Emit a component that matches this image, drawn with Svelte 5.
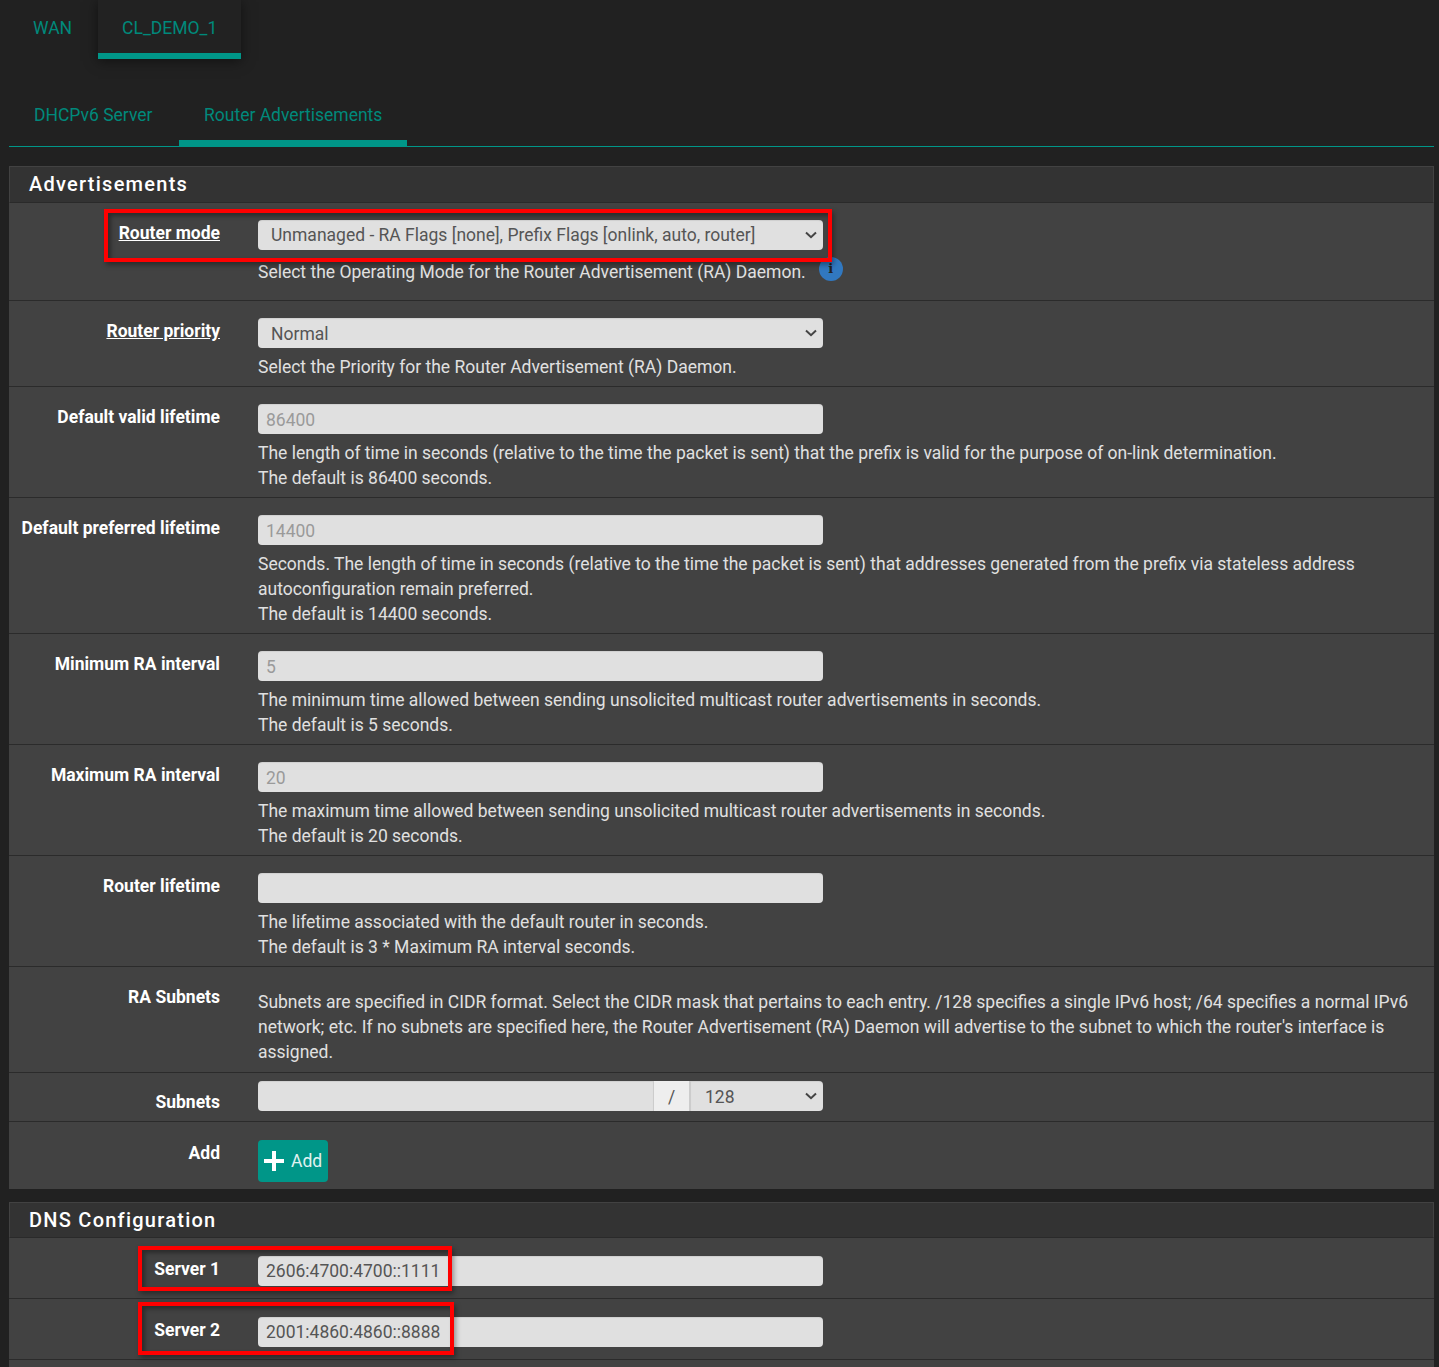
<script>
  const sections = [
    {
      title: 'Advertisements',
      rows: [
        { label: 'Router mode', link: true, h: 98, select: 'Unmanaged - RA Flags [none], Prefix Flags [onlink, auto, router]', help: ['Select the Operating Mode for the Router Advertisement (RA) Daemon.'], info: true, boxed: 'mode' },
        { label: 'Router priority', link: true, h: 86, select: 'Normal', help: ['Select the Priority for the Router Advertisement (RA) Daemon.'] },
        { label: 'Default valid lifetime', h: 111, placeholder: '86400', help: ['The length of time in seconds (relative to the time the packet is sent) that the prefix is valid for the purpose of on-link determination.', 'The default is 86400 seconds.'] },
        { label: 'Default preferred lifetime', h: 136, placeholder: '14400', help: ['Seconds. The length of time in seconds (relative to the time the packet is sent) that addresses generated from the prefix via stateless address autoconfiguration remain preferred.', 'The default is 14400 seconds.'] },
        { label: 'Minimum RA interval', h: 111, placeholder: '5', help: ['The minimum time allowed between sending unsolicited multicast router advertisements in seconds.', 'The default is 5 seconds.'] },
        { label: 'Maximum RA interval', h: 111, placeholder: '20', help: ['The maximum time allowed between sending unsolicited multicast router advertisements in seconds.', 'The default is 20 seconds.'] },
        { label: 'Router lifetime', h: 111, placeholder: '', help: ['The lifetime associated with the default router in seconds.', 'The default is 3 * Maximum RA interval seconds.'] },
        { label: 'RA Subnets', h: 106, textOnly: true, help: ["Subnets are specified in CIDR format. Select the CIDR mask that pertains to each entry. /128 specifies a single IPv6 host; /64 specifies a normal IPv6 network; etc. If no subnets are specified here, the Router Advertisement (RA) Daemon will advertise to the subnet to which the router's interface is assigned."] },
        { label: 'Subnets', h: 49, subnet: true, help: [] },
        { label: 'Add', h: 67, add: true, help: [] }
      ]
    },
    {
      title: 'DNS Configuration',
      rows: [
        { label: 'Server 1', h: 61, value: '2606:4700:4700::1111', help: [], boxed: 'server1' },
        { label: 'Server 2', h: 61, value: '2001:4860:4860::8888', help: [], boxed: 'server2' },
        { label: '', h: 8, spacer: true, help: [] }
      ]
    }
  ];
</script>

<div class="page">
  <div class="tabs top">
    <span class="tab">WAN</span>
    <span class="tab active">CL_DEMO_1</span>
  </div>
  <div class="tabs sub">
    <span class="subtab">DHCPv6 Server</span>
    <span class="subtab active">Router Advertisements</span>
  </div>

  {#each sections as section}
    <section class="panel">
      <h2>{section.title}</h2>
      {#each section.rows as row}
        <div class="row" class:spacer={row.spacer} class:last={row.add} style="height: {row.h}px">
          {#if !row.spacer}
            <div class="label" class:low={row.add || row.value} class:high={row.subnet}>
              {#if row.link}<u>{row.label}</u>{:else}{row.label}{/if}
            </div>
            <div class="field" class:textonly={row.textOnly} class:tight={row.subnet} class:dns={row.value} class:addrow={row.add}>
              {#if row.select}
                <div class="control select" class:raised={row.info}><span>{row.select}</span><svg viewBox="0 0 12 8" width="12" height="8"><path d="M1 1.5 6 6.2 11 1.5" /></svg></div>
              {:else if row.subnet}
                <div class="group">
                  <div class="control grow"></div>
                  <div class="slash">/</div>
                  <div class="control select mask"><span>128</span><svg viewBox="0 0 12 8" width="12" height="8"><path d="M1 1.5 6 6.2 11 1.5" /></svg></div>
                </div>
              {:else if row.add}
                <div class="add">
                  <svg viewBox="0 0 22 22" width="22" height="22"><path d="M9 1h4v8h8v4h-8v8H9v-8H1V9h8z" /></svg>
                  <span>Add</span>
                </div>
              {:else if row.placeholder !== undefined}
                <div class="control input ph">{row.placeholder}</div>
              {:else if row.value}
                <div class="control input val">{row.value}</div>
              {/if}
              {#each row.help as line}
                <p class="help" class:withinfo={row.info}>{line}{#if row.info}<span class="info">i</span>{/if}</p>
              {/each}
            </div>
            {#if row.boxed}<div class="redbox {row.boxed}"></div>{/if}
          {/if}
        </div>
      {/each}
    </section>
  {/each}
</div>

<style>
  :global(body) {
    background: #212121;
    overflow: hidden;
  }
  .page {
    height: 1367px;
    padding: 0 5px 0 9px;
    box-sizing: border-box;
    overflow: hidden;
    font-family: Roboto, "Liberation Sans", sans-serif;
    font-size: 17.5px;
    color: #e0e0e0;
  }
  .tabs {
    display: flex;
    white-space: nowrap;
  }
  .top {
    height: 59px;
  }
  .tab {
    height: 54px;
    padding: 18px 24px 0;
    box-sizing: border-box;
    color: #00897b;
    line-height: 20px;
  }
  .tab.active {
    height: 59px;
    width: 143px;
    margin-left: 2px;
    border-bottom: 6px solid #009688;
    background: #222;
    box-shadow: 0 2px 12px rgba(0, 0, 0, 0.5);
  }
  .sub {
    margin-top: 27px;
    height: 60px;
    border-bottom: 1px solid #009688;
  }
  .subtab {
    height: 60px;
    padding: 19px 25px 0;
    box-sizing: border-box;
    color: #00897b;
    line-height: 20px;
  }
  .subtab.active {
    margin-left: 1px;
    padding-left: 25.5px;
    width: 228px;
    border-bottom: 7px solid #009688;
    height: 61px;
  }
  .panel {
    margin-top: 19px;
    background: #424242;
  }
  .panel + .panel {
    margin-top: 13px;
  }
  h2 {
    margin: 0;
    height: 37px;
    padding: 0 0 0 19px;
    box-sizing: border-box;
    background: #333;
    border: 1px solid #424242;
    border-bottom: 1px solid #2a2a2a;
    font-size: 20px;
    font-weight: 500;
    line-height: 34px;
    letter-spacing: 1.25px;
    color: #fff;
  }
  .panel + .panel h2 {
    height: 36px;
  }
  .row {
    position: relative;
    display: flex;
    box-sizing: border-box;
    border-bottom: 1px solid #2b2b2b;
  }
  .row.spacer,
  .row.last {
    border-bottom: 0;
  }
  .label {
    width: 211px;
    flex: none;
    padding-top: 18px;
    text-align: right;
    font-weight: 700;
    line-height: 25px;
    color: #fff;
  }
  .label.high {
    padding-top: 17px;
  }
  .label.low {
    padding-top: 19px;
  }
  .field {
    margin-left: 38px;
    flex: 1;
    min-width: 0;
    padding-top: 17px;
    padding-right: 24px;
  }
  .field.textonly {
    padding-top: 23px;
  }
  .field.tight {
    padding-top: 8px;
  }
  .field.dns,
  .field.addrow {
    padding-top: 18px;
  }
  .control {
    width: 565px;
    height: 30px;
    box-sizing: border-box;
    border-radius: 4px;
    background: #e0e0e0;
    box-shadow: inset 0 1px 1px rgba(0, 0, 0, 0.075);
    line-height: 30px;
    color: #555;
  }
  .select {
    display: flex;
    align-items: center;
    justify-content: space-between;
    padding: 0 6px 0 13px;
  }
  .select span {
    position: relative;
    top: 1px;
  }
  .select.raised span {
    top: 0;
  }
  .select svg {
    fill: none;
    stroke: #444;
    stroke-width: 2;
  }
  .input {
    padding-left: 8px;
  }
  .ph {
    color: #9a9a9a;
    line-height: 32px;
  }
  .group {
    display: flex;
    width: 565px;
  }
  .grow {
    flex: 1;
    width: auto;
    border-radius: 4px 0 0 4px;
  }
  .slash {
    width: 38px;
    height: 30px;
    box-sizing: border-box;
    background: #eee;
    border-right: 2px solid #ccc;
    border-left: 1px solid #ccc;
    line-height: 32px;
    text-align: center;
    color: #555;
  }
  .mask {
    width: 132px;
    padding-left: 14px;
    border-radius: 0 4px 4px 0;
  }
  .add {
    width: 70px;
    height: 42px;
    border-radius: 4px;
    background: #009688;
    display: flex;
    align-items: center;
    gap: 6px;
    padding-left: 5px;
    box-sizing: border-box;
    color: #e0f2f1;
  }
  .add svg {
    fill: #fff;
  }
  .help {
    margin: 0;
    line-height: 25px;
    color: #e0e0e0;
  }
  .control + .help {
    padding-top: 7px;
  }
  .control + .help.withinfo {
    padding-top: 10px;
  }
  .info {
    display: inline-block;
    position: relative;
    top: -4px;
    vertical-align: middle;
    width: 24px;
    height: 24px;
    margin: -12px 0 -12px 13px;
    border-radius: 50%;
    background: #3178c0;
    color: #222;
    font-family: "DejaVu Serif", serif;
    font-weight: 700;
    font-size: 13px;
    line-height: 24px;
    text-align: center;
  }
  .redbox {
    position: absolute;
    box-sizing: border-box;
    border: 4px solid #f00;
    box-shadow: 2px 3px 5px rgba(0, 0, 0, 0.35), inset 3px 3px 4px rgba(0, 0, 0, 0.35);
  }
  .redbox.mode {
    left: 95px;
    top: 6px;
    width: 728px;
    height: 53px;
  }
  .redbox.server1 {
    left: 129px;
    top: 8px;
    width: 314px;
    height: 45px;
  }
  .redbox.server2 {
    left: 129px;
    top: 3px;
    width: 316px;
    height: 53px;
  }
</style>
